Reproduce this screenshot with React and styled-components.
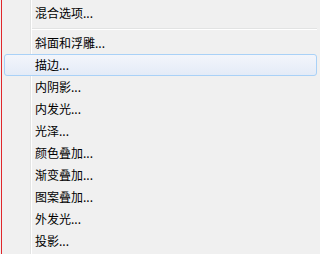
import React from "react";
import styled, { createGlobalStyle } from "styled-components";

const Global = createGlobalStyle`
  html, body {
    margin: 0;
    padding: 0;
    background: #f0f0f0;
  }
`;

const Menu = styled.div`
  width: 318px;
  height: 254px;
  box-sizing: border-box;
  padding-top: 2px;
  background-color: #f0f0f0;
  background-image:
    linear-gradient(to right,
      transparent 1px, #e0272b 1px, #e0272b 2px, transparent 2px,
      transparent 30px, #e2e3e3 30px, #e2e3e3 31px, #ffffff 31px, #ffffff 32px, transparent 32px);
  font-family: "Noto Sans CJK SC", "Noto Sans", sans-serif;
  font-size: 12px;
  color: #000;
  overflow: hidden;
`;

const Item = styled.div`
  height: 20px;
  line-height: 20px;
  margin: 0 1px 0 4px;
  padding-left: 30px;
  border: 1px solid ${(p) => (p.$active ? "#a9d1f7" : "transparent")};
  border-radius: 3px;
  background: ${(p) =>
    p.$active ? "linear-gradient(to bottom, #f3f5fb, #e4ebf7)" : "transparent"};
  white-space: nowrap;
`;

const Separator = styled.div`
  height: 2px;
  margin: 4px 1px 2px 32px;
  border-top: 1px solid #e2e3e3;
  border-bottom: 1px solid #ffffff;
  box-sizing: border-box;
`;

const items = [
  "斜面和浮雕...",
  "描边...",
  "内阴影...",
  "内发光...",
  "光泽...",
  "颜色叠加...",
  "渐变叠加...",
  "图案叠加...",
  "外发光...",
  "投影...",
];

export default function App() {
  return (
    <>
      <Global />
      <Menu>
        <Item>混合选项...</Item>
        <Separator />
        {items.map((label) => (
          <Item key={label} $active={label === "描边..."}>
            {label}
          </Item>
        ))}
      </Menu>
    </>
  );
}
